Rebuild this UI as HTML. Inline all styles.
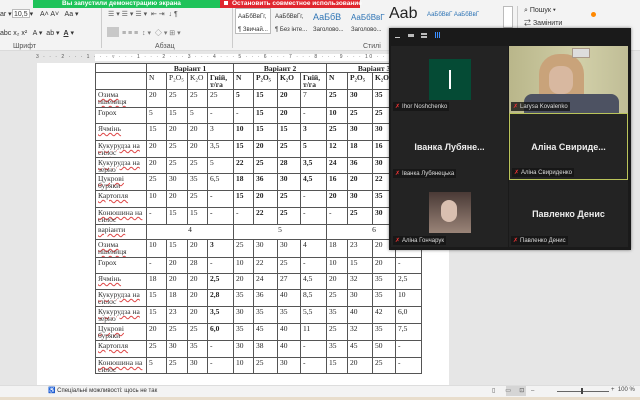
<!DOCTYPE html>
<html><head><meta charset="utf-8"><style>
*{margin:0;padding:0;box-sizing:border-box}
body{width:640px;height:400px;overflow:hidden;background:#e6e6e6;font-family:"Liberation Sans","Noto Sans CJK SC",sans-serif;position:relative}
.a{position:absolute}
.rib{left:0;top:0;width:640px;height:51px;background:#f3f3f3;border-bottom:1px solid #dadada}
.t{font-size:7px;color:#333;white-space:nowrap}
table{border-collapse:collapse;table-layout:fixed;font-family:"Liberation Serif",serif;font-size:7.5px;color:#222}
td{border:1px solid #555;vertical-align:top;padding:1px 2px 0;line-height:7px;overflow:hidden;white-space:nowrap}
td.w{white-space:normal}
td.n{color:#333;text-decoration:underline wavy #d44;text-decoration-thickness:1px;white-space:normal}
.b{font-weight:bold}
.tile{position:absolute;background:#232323}
.lbl{position:absolute;left:2px;bottom:2px;background:rgba(20,20,20,.8);color:#ddd;font-size:6px;padding:1px 2px;white-space:nowrap}
.lbl i{color:#e33;font-style:normal;margin-right:2px}
.nm{position:absolute;left:0;right:0;top:50%;margin-top:-5px;text-align:center;color:#eee;font-weight:bold;font-size:9px;white-space:nowrap}
</style></head><body>
<div class="a" style="left:0;top:0;width:640px;height:3px;background:#2b579a"></div>
<div class="a rib"></div>
<div class="a t" style="left:0;top:10px">ar ▾</div>
<div class="a" style="left:12px;top:9px;width:18px;height:9px;border:1px solid #bbb;background:#fff"></div>
<div class="a t" style="left:14px;top:10px">10,5 ▾</div>
<div class="a t" style="left:40px;top:10px">A˄ A˅ &nbsp; Aa ▾</div>
<div class="a t" style="left:0;top:29px">abc x₂ x² &nbsp; A ▾ &nbsp;ab ▾ &nbsp;<b style="text-decoration:underline">A</b> ▾</div>
<div class="a t" style="left:13px;top:43px;color:#555">Шрифт</div>
<div class="a" style="left:101px;top:6px;width:1px;height:42px;background:#ccc"></div>
<div class="a t" style="left:108px;top:10px;color:#555">☰ ▾ ☰ ▾ ☰ ▾ &nbsp;⇤ ⇥ &nbsp;↓ ¶</div>
<div class="a" style="left:107px;top:27px;width:12px;height:10px;background:#c8c8c8"></div>
<div class="a t" style="left:122px;top:28px;color:#777">≡ ≡ ≡ &nbsp;↕ ▾ &nbsp;◇ ▾ ⊞ ▾</div>
<div class="a t" style="left:155px;top:43px;color:#555">Абзац</div>
<div class="a" style="left:232px;top:6px;width:1px;height:42px;background:#ccc"></div>
<div class="a" style="left:235px;top:8px;width:36px;height:26px;background:#fff;border:1px solid #bbb"></div>
<div class="a t" style="left:238px;top:14px;font-size:6px">АаБбВвГг,</div>
<div class="a t" style="left:238px;top:27px;font-size:6px">¶ Звичай...</div>
<div class="a t" style="left:275px;top:14px;font-size:6px">АаБбВвГг,</div>
<div class="a t" style="left:275px;top:27px;font-size:6px">¶ Без інте...</div>
<div class="a t" style="left:313px;top:12px;font-size:9px;color:#2e74b5">АаБбВ</div>
<div class="a t" style="left:313px;top:27px;font-size:6px">Заголово...</div>
<div class="a t" style="left:351px;top:13px;font-size:8px;color:#2e74b5">АаБбВвГ</div>
<div class="a t" style="left:351px;top:27px;font-size:6px">Заголово...</div>
<div class="a t" style="left:389px;top:5px;font-size:16px;color:#222">Aab</div>
<div class="a t" style="left:427px;top:12px;font-size:6px;color:#2e74b5">АаБбВвГ АаБбВвГ</div>
<div class="a" style="left:503px;top:6px;width:10px;height:22px;border:1px solid #bbb;background:#fff"></div>
<div class="a t" style="left:363px;top:43px;color:#555">Стилі</div>
<div class="a" style="left:517px;top:6px;width:1px;height:42px;background:#ccc"></div>
<div class="a t" style="left:524px;top:7px;color:#333">⌕ Пошук ▾</div>
<div class="a t" style="left:524px;top:18px;color:#333">⇄ Замінити</div>
<div class="a" style="left:591px;top:12px;width:5px;height:5px;border-radius:50%;background:#f80"></div>
<div class="a" style="left:33px;top:0;width:187px;height:8px;background:#1fc35a"></div>
<div class="a t" style="left:62px;top:0;font-size:6.5px;color:#fff;font-weight:bold;line-height:7px">Вы запустили демонстрацию экрана</div>
<div class="a" style="left:220px;top:0;width:140px;height:8px;background:#e0262e"></div>
<div class="a" style="left:224px;top:1px;width:4px;height:4px;background:#fff"></div>
<div class="a t" style="left:232px;top:0;font-size:6.5px;color:#fff;font-weight:bold;line-height:7px">Остановить совместное использование</div>
<div class="a" style="left:0;top:52px;width:640px;height:11px;background:#e6e6e6"></div>
<div class="a" style="left:95px;top:54px;width:300px;height:7px;background:#fff"></div>
<div class="a t" style="left:36px;top:54px;font-size:5px;color:#555;letter-spacing:1.5px">3 · · · 2 · · · 1 · · · ▿ · · · 1 · · · 2 · · · 3 · · · 4 · · · 5 · · · 6 · · · 7 · · · 8 · · · 9 · · · 10 · · 11 · · 12 · · 13 · · 14 ·</div>
<div class="a" style="left:37px;top:63px;width:412px;height:322px;background:#fff"></div>
<table class="a" style="left:95px;top:63px;width:326px">
<colgroup><col style="width:51px"><col style="width:20px"><col style="width:21px"><col style="width:20px"><col style="width:26px"><col style="width:20px"><col style="width:24px"><col style="width:23px"><col style="width:26px"><col style="width:21px"><col style="width:25px"><col style="width:23px"><col style="width:26px"></colgroup>
<tr style="height:8px"><td></td><td colspan="4" class="b" style="text-align:center;text-decoration:underline">Варіант 1</td><td colspan="4" class="b" style="text-align:center;text-decoration:underline">Варіант 2</td><td colspan="4" class="b" style="text-align:center;text-decoration:underline">Варіант 3</td></tr>
<tr style="height:17px"><td></td><td>N</td><td>P₂O₅</td><td>K₂O</td><td class="b w">Гній, т/га</td><td class="b">N</td><td class="b">P₂O₅</td><td class="b">K₂O</td><td class="b w">Гній, т/га</td><td class="b">N</td><td class="b">P₂O₅</td><td class="b">K₂O</td><td></td></tr>
<tr style="height:18px"><td class="n">Озима пшениця</td><td>20</td><td>25</td><td>25</td><td>25</td><td class="b">5</td><td class="b">15</td><td class="b">20</td><td>7</td><td class="b">25</td><td class="b">30</td><td class="b">35</td><td></td></tr>
<tr style="height:16px"><td>Горох</td><td>5</td><td>15</td><td>5</td><td>-</td><td>-</td><td class="b">15</td><td class="b">20</td><td>-</td><td class="b">10</td><td class="b">25</td><td class="b">25</td><td></td></tr>
<tr style="height:17px"><td class="n">Ячмінь</td><td>15</td><td>20</td><td>20</td><td>3</td><td class="b">10</td><td class="b">15</td><td class="b">15</td><td class="b">3</td><td class="b">25</td><td class="b">30</td><td class="b">30</td><td></td></tr>
<tr style="height:17px"><td class="n">Кукурудза на силос</td><td>20</td><td>25</td><td>20</td><td>3,5</td><td class="b">15</td><td class="b">20</td><td class="b">25</td><td class="b">5</td><td class="b">12</td><td class="b">18</td><td class="b">16</td><td></td></tr>
<tr style="height:16px"><td class="n">Кукурудза на зерно</td><td>20</td><td>25</td><td>25</td><td>5</td><td class="b">22</td><td class="b">25</td><td class="b">28</td><td class="b">3,5</td><td class="b">24</td><td class="b">36</td><td class="b">30</td><td></td></tr>
<tr style="height:17px"><td class="n">Цукрові буряки</td><td>25</td><td>30</td><td>35</td><td>6,5</td><td class="b">18</td><td class="b">36</td><td class="b">30</td><td class="b">4,5</td><td class="b">16</td><td class="b">20</td><td class="b">22</td><td></td></tr>
<tr style="height:17px"><td class="n">Картопля</td><td>10</td><td>20</td><td>25</td><td class="b">-</td><td class="b">15</td><td class="b">20</td><td class="b">25</td><td>-</td><td class="b">20</td><td class="b">30</td><td class="b">35</td><td></td></tr>
<tr style="height:17px"><td class="n">Конюшина на силос</td><td>-</td><td>15</td><td>15</td><td class="b">-</td><td>-</td><td class="b">22</td><td class="b">25</td><td>-</td><td>-</td><td class="b">25</td><td class="b">30</td><td></td></tr>
<tr style="height:15px"><td class="n">варіанти</td><td colspan="4" style="text-align:center">4</td><td colspan="4" style="text-align:center">5</td><td colspan="4" style="text-align:center">6</td></tr>
<tr style="height:18px"><td class="n">Озима пшениця</td><td>10</td><td>15</td><td>20</td><td class="b">3</td><td>25</td><td>30</td><td>30</td><td>4</td><td>18</td><td>23</td><td>20</td><td>-</td></tr>
<tr style="height:16px"><td>Горох</td><td>-</td><td>20</td><td>28</td><td>-</td><td>10</td><td>22</td><td>25</td><td>-</td><td>10</td><td>15</td><td>20</td><td>-</td></tr>
<tr style="height:16px"><td class="n">Ячмінь</td><td>18</td><td>20</td><td>20</td><td class="b">2,5</td><td>20</td><td>24</td><td>27</td><td>4,5</td><td>20</td><td>32</td><td>35</td><td>2,5</td></tr>
<tr style="height:17px"><td class="n">Кукурудза на силос</td><td>15</td><td>18</td><td>20</td><td class="b">2,8</td><td>35</td><td>36</td><td>40</td><td>8,5</td><td>25</td><td>30</td><td>35</td><td>10</td></tr>
<tr style="height:17px"><td class="n">Кукурудза на зерно</td><td>15</td><td>23</td><td>20</td><td class="b">3,5</td><td>30</td><td>35</td><td>35</td><td>5,5</td><td>35</td><td>40</td><td>42</td><td>6,0</td></tr>
<tr style="height:17px"><td class="n">Цукрові буряки</td><td>20</td><td>25</td><td>25</td><td class="b">6,0</td><td>35</td><td>45</td><td>40</td><td>11</td><td>25</td><td>32</td><td>35</td><td>7,5</td></tr>
<tr style="height:17px"><td class="n">Картопля</td><td>25</td><td>30</td><td>35</td><td>-</td><td>30</td><td>38</td><td>40</td><td>-</td><td>35</td><td>45</td><td>50</td><td>-</td></tr>
<tr style="height:16px"><td class="n">Конюшина на силос</td><td>5</td><td>25</td><td>30</td><td>-</td><td>10</td><td>25</td><td>30</td><td>-</td><td>15</td><td>20</td><td>25</td><td>-</td></tr>
</table>
<div class="a" style="left:0;top:385px;width:640px;height:12px;background:#f3f3f3;border-top:1px solid #ddd"></div>
<div class="a t" style="left:48px;top:387px;font-size:6px;color:#333">♿ Спеціальні можливості: щось не так</div>
<div class="a" style="left:506px;top:386px;width:20px;height:10px;background:#d5d5d5"></div>
<div class="a t" style="left:492px;top:387px;font-size:6px;color:#555">▯ &nbsp;&nbsp;&nbsp;&nbsp;&nbsp;▭ &nbsp;&nbsp;&nbsp;&nbsp;⊡ &nbsp;&nbsp;&nbsp;–</div>
<div class="a" style="left:557px;top:391px;width:52px;height:1px;background:#666"></div>
<div class="a" style="left:581px;top:388px;width:2px;height:6px;background:#444"></div>
<div class="a t" style="left:611px;top:387px;font-size:6px;color:#444">+ &nbsp;100 %</div>
<div class="a" style="left:0;top:397px;width:640px;height:3px;background:#e8ddcc"></div>
<div class="a" style="left:389px;top:28px;width:242px;height:222px;background:#1a1a1a;box-shadow:0 0 3px rgba(0,0,0,.5)"></div>
<div class="a" style="left:395px;top:37px;width:5px;height:1px;background:#ccc"></div>
<div class="a" style="left:408px;top:34px;width:6px;height:3px;background:#bbb"></div>
<div class="a" style="left:421px;top:33px;width:6px;height:5px;border-top:2px solid #bbb;border-bottom:2px solid #bbb"></div>
<div class="a" style="left:435px;top:32px;width:6px;height:6px;background:repeating-linear-gradient(90deg,#3b8dfd 0 1px,#1a1a1a 1px 2px)"></div>
<div class="tile" style="left:391px;top:46px;width:117px;height:67px">
 <div class="a" style="left:38px;top:13px;width:42px;height:41px;background:#054b35"></div>
 <div class="a" style="left:58px;top:24px;width:2px;height:19px;background:#fff"></div>
 <div class="lbl"><i>✗</i>Ihor Noshchenko</div></div>
<div class="tile" style="left:509px;top:46px;width:119px;height:67px;background:linear-gradient(90deg,#b9b68a,#d1cfa8 60%,#c0bd96)">
 <div class="a" style="left:30px;top:8px;width:45px;height:60px;border-radius:20px 20px 0 0;background:#c9a37a"></div>
 <div class="a" style="left:40px;top:20px;width:24px;height:28px;border-radius:10px;background:#d8b8a0"></div>
 <div class="a" style="left:15px;top:48px;width:95px;height:19px;background:#4d5262;border-radius:8px 8px 0 0"></div>
 <div class="a" style="left:63px;top:2px;width:18px;height:10px;border:1px solid #a98;background:#ddd"></div>
 <div class="lbl"><i>✗</i>Larysa Kovalenko</div></div>
<div class="tile" style="left:391px;top:113px;width:117px;height:67px"><div class="nm">Іванка Лубяне...</div><div class="lbl"><i>✗</i>Іванка Лубянецька</div></div>
<div class="tile" style="left:509px;top:113px;width:119px;height:67px;border:1px solid #bac45a"><div class="nm">Аліна Свириде...</div><div class="lbl"><i>✗</i>Аліна Свириденко</div></div>
<div class="tile" style="left:391px;top:180px;width:117px;height:67px">
 <div class="a" style="left:38px;top:12px;width:42px;height:41px;background:linear-gradient(180deg,#4a3a36,#9a8478)"></div>
 <div class="a" style="left:50px;top:20px;width:16px;height:22px;border-radius:8px;background:#d9bfb0"></div>
 <div class="lbl"><i>✗</i>Аліна Гончарук</div></div>
<div class="tile" style="left:509px;top:180px;width:119px;height:67px"><div class="nm">Павленко Денис</div><div class="lbl"><i>✗</i>Павленко Денис</div></div>
</body></html>
